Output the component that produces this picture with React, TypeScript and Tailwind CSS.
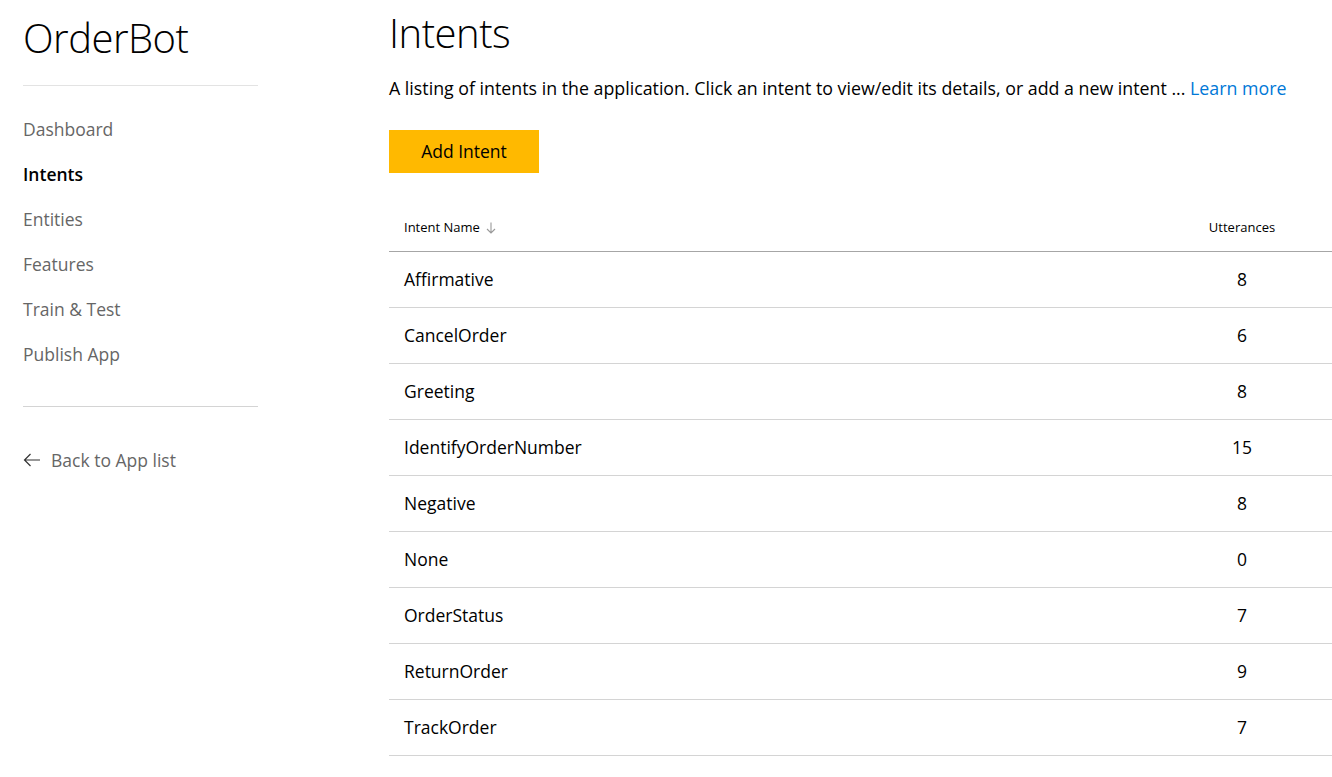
import React from 'react';

const intents = [
  { name: 'Affirmative', count: 8 },
  { name: 'CancelOrder', count: 6 },
  { name: 'Greeting', count: 8 },
  { name: 'IdentifyOrderNumber', count: 15 },
  { name: 'Negative', count: 8 },
  { name: 'None', count: 0 },
  { name: 'OrderStatus', count: 7 },
  { name: 'ReturnOrder', count: 9 },
  { name: 'TrackOrder', count: 7 },
];

const navItems = ['Dashboard', 'Intents', 'Entities', 'Features', 'Train & Test', 'Publish App'];

export default function App() {
  return (
    <div
      className="flex min-h-[777px] w-[1332px] overflow-hidden bg-white text-[#212121]"
      style={{ fontFamily: '"Open Sans", "Noto Sans", sans-serif' }}
    >
      {/* Sidebar */}
      <aside className="w-[389px] shrink-0 pl-[23px]">
        <div className="w-[235px]">
          <h1 className="pt-[10px] text-[40px] font-light leading-[56px] tracking-[-0.5px] text-black">OrderBot</h1>
          <div className="mt-[19px] h-px bg-[#e3e3e3]" />
          <nav className="flex flex-col pt-[31px]">
            {navItems.map((item) => (
              <a
                key={item}
                className={
                  'h-[45px] text-[17.5px] leading-[24px] ' +
                  (item === 'Intents' ? 'font-semibold text-black' : 'text-[#666666]')
                }
              >
                {item}
              </a>
            ))}
          </nav>
          <div className="mt-[19px] h-px bg-[#d4d4d4]" />
          <a className="mt-[41px] flex items-center gap-[10px] text-[17.5px] leading-[24px] text-[#666666]">
            <svg width="18" height="14" viewBox="0 0 18 14" fill="none" stroke="#333" strokeWidth="1.2">
              <path d="M17 7H1.5M7.5 1L1.5 7l6 6" />
            </svg>
            Back to App list
          </a>
        </div>
      </aside>

      {/* Main */}
      <main className="flex-1">
        <h2 className="pt-[6px] text-[40px] font-light leading-[54px] tracking-[-0.5px] text-black">Intents</h2>
        <p className="mt-[16px] text-[17.8px] leading-[24px] text-black">
          A listing of intents in the application. Click an intent to view/edit its details, or add a new intent ...{' '}
          <a className="text-[#0078d7]">Learn more</a>
        </p>
        <button className="mt-[30px] h-[43px] w-[150px] bg-[#ffb900] text-[17.5px] text-black">Add Intent</button>

        <table className="mt-[32px] w-[943px] table-fixed border-collapse">
          <thead>
            <tr className="h-[46px] border-b border-[#a6a6a6]">
              <th className="pl-[15px] text-left text-[13px] font-normal text-black">
                <span className="inline-flex items-center gap-[6px]">
                  Intent Name
                  <svg width="10" height="12" viewBox="0 0 10 12" fill="none" stroke="#999" strokeWidth="1.1">
                    <path d="M5 0.5v10.5M1 7l4 4 4-4" />
                  </svg>
                </span>
              </th>
              <th className="w-[180px] text-center text-[13px] font-normal text-black">Utterances</th>
            </tr>
          </thead>
          <tbody>
            {intents.map((row) => (
              <tr key={row.name} className="h-[56px] border-b border-[#d4d4d4]">
                <td className="pl-[15px] text-[17.5px] text-black">{row.name}</td>
                <td className="text-center text-[17.5px] text-black">{row.count}</td>
              </tr>
            ))}
          </tbody>
        </table>
      </main>
    </div>
  );
}
